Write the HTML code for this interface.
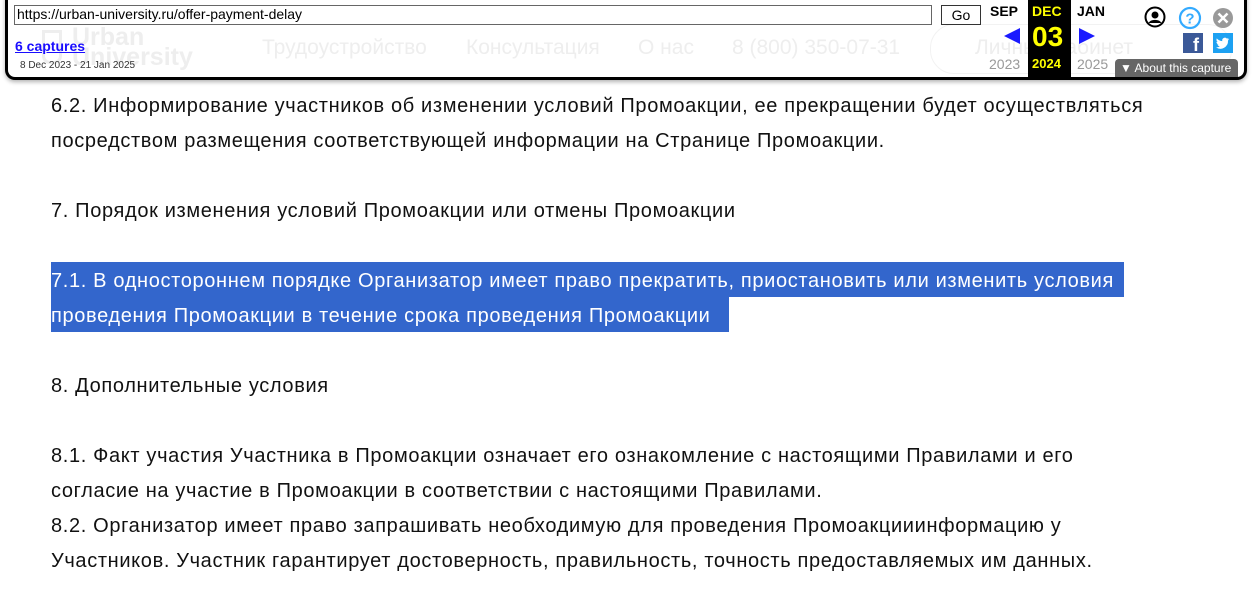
<!DOCTYPE html>
<html><head><meta charset="utf-8"><style>
body{margin:0;width:1254px;height:597px;background:#fff;position:relative;overflow:hidden;font-family:"Liberation Sans",sans-serif}
.t{position:absolute;left:51px;font-size:20px;color:#111;white-space:nowrap;line-height:35px;letter-spacing:0.65px}
#tb{position:absolute;left:5px;top:-5px;width:1236px;height:82px;background:#fff;border:3px solid #000;border-top:none;border-radius:0 0 10px 10px;box-shadow:0 2px 4px rgba(0,0,0,.3)}
.a{position:absolute;font-size:13px;font-family:"Liberation Sans",sans-serif}
.ghost{position:absolute;color:#eee;font-size:21px;top:36px}
</style></head><body>
<div class="t" style="top:89px">6.2. Информирование участников об изменении условий Промоакции, ее прекращении будет осуществляться</div>
<div class="t" style="top:124px">посредством размещения соответствующей информации на Странице Промоакции.</div>
<div class="t" style="top:194px">7. Порядок изменения условий Промоакции или отмены Промоакции</div>
<div style="position:absolute;left:51px;top:262px;width:1073px;height:35px;background:#3366cc"></div>
<div style="position:absolute;left:51px;top:297px;width:678px;height:35px;background:#3366cc"></div>
<div class="t" style="top:264px;color:#fff">7.1. В одностороннем порядке Организатор имеет право прекратить, приостановить или изменить условия</div>
<div class="t" style="top:299px;color:#fff">проведения Промоакции в течение срока проведения Промоакции</div>
<div class="t" style="top:369px">8. Дополнительные условия</div>
<div class="t" style="top:439px">8.1. Факт участия Участника в Промоакции означает его ознакомление с настоящими Правилами и его</div>
<div class="t" style="top:474px">согласие на участие в Промоакции в соответствии с настоящими Правилами.</div>
<div class="t" style="top:509px">8.2. Организатор имеет право запрашивать необходимую для проведения Промоакцииинформацию у</div>
<div class="t" style="top:544px">Участников. Участник гарантирует достоверность, правильность, точность предоставляемых им данных.</div>

<div id="tb"></div>
<div style="position:absolute;left:42px;top:30px;width:20px;height:34px;border:3px solid #eee;border-radius:0 0 8px 8px;box-sizing:border-box"></div>
<div class="ghost" style="left:72px;top:27px;font-weight:bold;font-size:25px;line-height:20px;color:#eee">Urban<br>University</div>
<div class="ghost" style="left:262px">Трудоустройство</div>
<div class="ghost" style="left:466px">Консультация</div>
<div class="ghost" style="left:638px">О нас</div>
<div class="ghost" style="left:732px">8 (800) 350-07-31</div>
<div style="position:absolute;left:930px;top:24px;width:300px;height:48px;border:1px solid #f2f2f2;border-radius:24px"></div>
<div class="ghost" style="left:975px">Личный кабинет</div>
<div style="position:absolute;left:14px;top:5px;width:918px;height:20px;border:1px solid #666;box-sizing:border-box;background:#fff"></div>
<div class="a" style="left:17px;top:6px;font-size:14px">https://urban-university.ru/offer-payment-delay</div>
<div style="position:absolute;left:941px;top:5px;width:40px;height:20px;border:1px solid #333;box-sizing:border-box;font-size:14px;text-align:center;line-height:18px;background:#fff">Go</div>
<div class="a" style="left:15px;top:38px;font-weight:bold;color:#1a0dff;text-decoration:underline;font-size:14px">6 captures</div>
<div class="a" style="left:20px;top:60px;font-size:10px;color:#333">8 Dec 2023 - 21 Jan 2025</div>
<div class="a" style="left:990px;top:3px;font-weight:bold;font-size:14px">SEP</div>
<div style="position:absolute;left:1028px;top:0;width:43px;height:77px;background:#000"></div>
<div class="a" style="left:1032px;top:3px;font-weight:bold;font-size:14px;color:#ff0">DEC</div>
<div class="a" style="left:1032px;top:21px;font-weight:bold;font-size:28px;color:#ff0">03</div>
<div class="a" style="left:1032px;top:56px;font-weight:bold;font-size:13px;color:#ff0">2024</div>
<div class="a" style="left:1077px;top:3px;font-weight:bold;font-size:14px">JAN</div>
<div class="a" style="left:989px;top:56px;color:#999;font-size:14px">2023</div>
<div class="a" style="left:1077px;top:56px;color:#999;font-size:14px">2025</div>
<svg style="position:absolute;left:1002px;top:26px" width="20" height="20"><path d="M18 2L2 10L18 18Z" fill="#1a1aff"/></svg>
<svg style="position:absolute;left:1077px;top:26px" width="20" height="20"><path d="M2 2L18 10L2 18Z" fill="#1a1aff"/></svg>
<svg style="position:absolute;left:1144px;top:6px" width="22" height="22"><circle cx="11" cy="11" r="9.5" fill="#fff" stroke="#000" stroke-width="2"/><circle cx="11" cy="9" r="3.5"/><path d="M4.5 17a7 5 0 0 1 13 0z"/></svg>
<svg style="position:absolute;left:1178px;top:6px" width="24" height="24"><circle cx="12" cy="12" r="10" fill="none" stroke="#3af" stroke-width="2.2"/><text x="12" y="17.5" font-size="15" font-weight="bold" text-anchor="middle" fill="#3af" font-family="Liberation Sans">?</text></svg>
<svg style="position:absolute;left:1212px;top:7px" width="22" height="22"><circle cx="11" cy="11" r="10" fill="#999"/><path d="M6.5 6.5L15.5 15.5M15.5 6.5L6.5 15.5" stroke="#fff" stroke-width="2.5"/></svg>
<div style="position:absolute;left:1183px;top:33px;width:20px;height:20px;background:#3b5998;color:#fff;font-weight:bold;font-size:18px;text-align:right;line-height:24px;box-sizing:border-box;padding-right:4px;overflow:hidden">f</div>
<svg style="position:absolute;left:1213px;top:33px" width="20" height="20"><rect width="20" height="20" fill="#1da1f2"/><path d="M16 6c-.5.2-1 .4-1.6.4.6-.3 1-.8 1.2-1.4-.5.3-1.1.5-1.7.6a2.7 2.7 0 0 0-4.6 2.5C7 8 5.1 7 3.8 5.4c-.7 1.2-.3 2.8.8 3.6-.4 0-.8-.1-1.2-.3 0 1.3.9 2.4 2.2 2.7-.4.1-.8.1-1.2 0 .3 1.1 1.4 1.9 2.5 1.9A5.5 5.5 0 0 1 3 14.4 7.7 7.7 0 0 0 15 7.5c.4-.4.8-.9 1-1.5z" fill="#fff"/></svg>
<div style="position:absolute;left:1115px;top:59px;width:123px;height:18px;background:#666;border-radius:4px 4px 0 0;color:#fff;font-size:12px;line-height:18px;padding-left:5px;box-sizing:border-box">▼ About this capture</div>
</body></html>
